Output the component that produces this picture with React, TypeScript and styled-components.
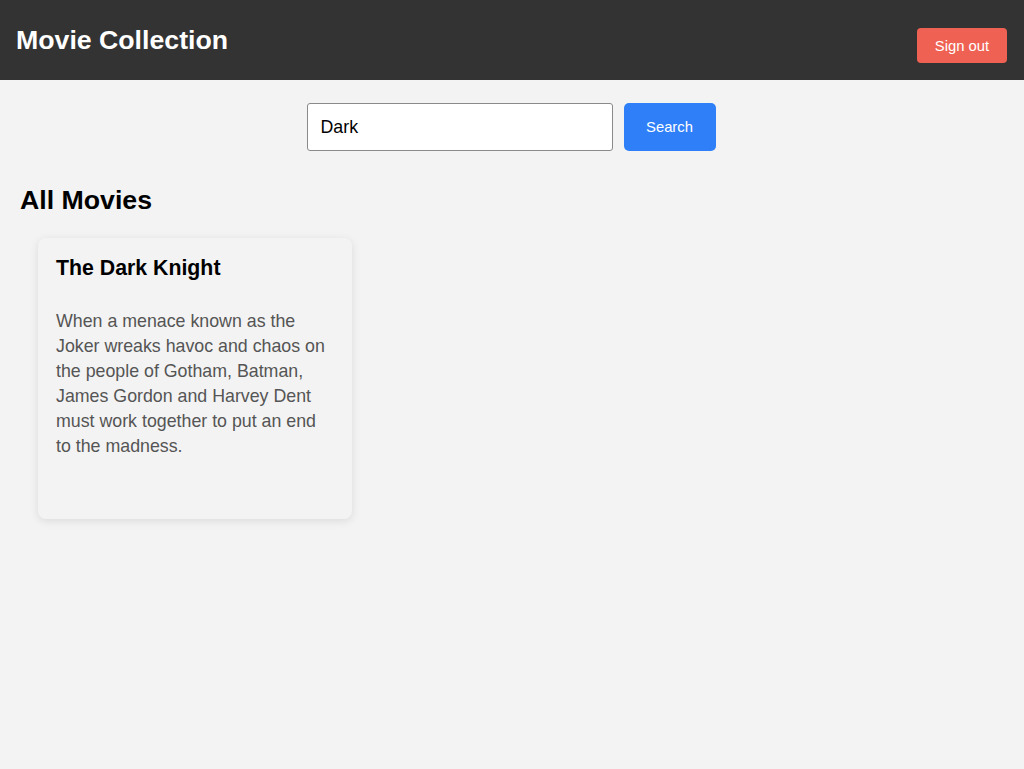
import styled, { createGlobalStyle } from 'styled-components';
import { useState } from 'react';

const GlobalStyle = createGlobalStyle`
  * {
    box-sizing: border-box;
  }

  body {
    margin: 0;
    background-color: #f3f3f3;
    font-family: "Liberation Sans", Arial, Helvetica, sans-serif;
    color: #000;
  }
`;

const Page = styled.div`
  min-height: 769px;
  background-color: #f3f3f3;
`;

const Header = styled.header`
  height: 80px;
  background-color: #333333;
  padding: 0 17px 0 16px;
  display: flex;
  align-items: center;
  justify-content: space-between;
`;

const Title = styled.h1`
  margin: 0;
  color: #ffffff;
  font-size: 26.7px;
  font-weight: 700;
  line-height: normal;
`;

const SignOutButton = styled.button`
  margin-top: 11px;
  width: 90px;
  height: 35px;
  border: none;
  border-radius: 4px;
  background-color: #ef6253;
  color: #ffffff;
  font-family: inherit;
  font-size: 14.8px;
  cursor: pointer;
`;

const SearchForm = styled.form`
  display: flex;
  justify-content: center;
  gap: 11px;
  padding: 23px 2px 0 0;
`;

const SearchInput = styled.input`
  width: 306px;
  height: 48px;
  padding: 0 13px;
  border: 1px solid #8a8a8a;
  border-radius: 3px;
  background-color: #ffffff;
  font-family: inherit;
  font-size: 17.8px;
  color: #000;
  outline: none;
`;

const SearchButton = styled.button`
  width: 92px;
  height: 48px;
  border: none;
  border-radius: 5px;
  background-color: #2f80f8;
  color: #ffffff;
  font-family: inherit;
  font-size: 14.8px;
  cursor: pointer;
`;

const Section = styled.section`
  padding: 0 20px;
`;

const SectionTitle = styled.h2`
  margin: 34px 0 22px;
  font-size: 26.7px;
  font-weight: 700;
  line-height: normal;
`;

const MovieGrid = styled.div`
  display: grid;
  grid-template-columns: repeat(3, 314px);
  gap: 18px;
  padding: 0 18px;
`;

const MovieCard = styled.article`
  height: 281px;
  padding: 18px 18px;
  border-radius: 8px;
  background-color: #f3f3f3;
  box-shadow: 0 2px 8px rgba(0, 0, 0, 0.1);
`;

const MovieTitle = styled.h3`
  margin: 0;
  font-size: 21.3px;
  font-weight: 700;
  line-height: normal;
`;

const MovieDescription = styled.p`
  margin: 28px 0 0;
  color: #555555;
  font-size: 17.8px;
  line-height: 25px;
`;

const movies = [
  {
    id: 1,
    title: 'The Dark Knight',
    description:
      'When a menace known as the Joker wreaks havoc and chaos on the people of Gotham, Batman, James Gordon and Harvey Dent must work together to put an end to the madness.',
  },
];

const App = () => {
  const [query, setQuery] = useState('Dark');

  return (
    <Page>
      <GlobalStyle />
      <Header>
        <Title>Movie Collection</Title>
        <SignOutButton>Sign out</SignOutButton>
      </Header>

      <SearchForm onSubmit={(e) => e.preventDefault()}>
        <SearchInput value={query} onChange={(e) => setQuery(e.target.value)} />
        <SearchButton type="submit">Search</SearchButton>
      </SearchForm>

      <Section>
        <SectionTitle>All Movies</SectionTitle>
        <MovieGrid>
          {movies.map((movie) => (
            <MovieCard key={movie.id}>
              <MovieTitle>{movie.title}</MovieTitle>
              <MovieDescription>{movie.description}</MovieDescription>
            </MovieCard>
          ))}
        </MovieGrid>
      </Section>
    </Page>
  );
};

export default App;
